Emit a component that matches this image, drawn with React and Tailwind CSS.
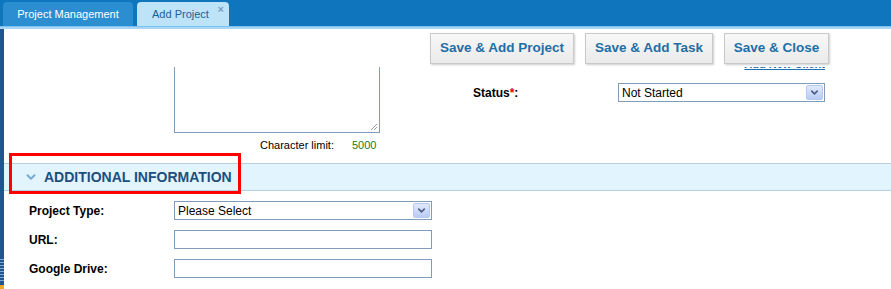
import { ChevronDown } from 'lucide-react';

const font = { fontFamily: '"Liberation Sans", Arial, sans-serif' };

function SelectBox({ value, width }) {
  return (
    <div className={`flex items-center justify-between h-[19px] ${width} border border-[#7f9db9] bg-white pl-[3px] pr-px`}>
      <span className="text-[12px] text-black leading-none">{value}</span>
      <span className="w-[17px] h-[15px] rounded-[2px] bg-gradient-to-b from-[#e1e9fc] to-[#b9ccf4] border border-[#b7c8ef] flex items-center justify-center">
        <ChevronDown className="w-[11px] h-[11px] text-[#4c5f85]" strokeWidth={3.5} />
      </span>
    </div>
  );
}

function Field({ label, children }) {
  return (
    <div className="flex items-center h-[19px]">
      <div className="w-[170px] pl-[25px] text-[12px] font-bold text-black">{label}</div>
      {children}
    </div>
  );
}

export default function App() {
  return (
    <div className="w-[891px] h-[289px] overflow-hidden bg-white flex flex-col" style={font}>
      {/* tab strip */}
      <div className="h-[26px] bg-[#0f75bc] flex items-end pl-[3px] gap-[4px] shrink-0">
        <div className="h-[24px] w-[130px] rounded-t-[4px] bg-[#2b8ed0] flex items-center justify-center text-[11px] text-white">
          Project Management
        </div>
        <div className="relative h-[24px] w-[92px] rounded-t-[4px] bg-[#bde3f9] flex items-center pl-[15px] text-[11px] text-[#1a5f98]">
          Add Project
          <span className="absolute right-[5px] top-[2px] text-[11px] font-bold text-[#7d9fbf] leading-none">×</span>
        </div>
      </div>
      <div className="h-[3px] bg-[#a8d6f6] border-t border-[#7fc0ec] shrink-0" />

      <div className="flex flex-1 min-h-0">
        {/* left splitter */}
        <div className="w-[4px] bg-[#1f5591] flex flex-col shrink-0">
          <div className="flex-1" />
          <div className="h-[22px] mb-[4px] bg-[repeating-linear-gradient(to_bottom,#7fa9d6_0px,#7fa9d6_1px,#1f5591_1px,#1f5591_3px)]" />
          <div className="h-[4px] bg-[#f5a623]" />
        </div>

        <div className="flex-1 relative flex flex-col">
          {/* toolbar */}
          <div className="h-[38px] flex justify-end items-start pt-[4px] pr-[62px] gap-[11px] bg-white relative z-10">
            {['Save & Add Project', 'Save & Add Task', 'Save & Close'].map((t, i) => (
              <button
                key={t}
                className={`h-[31px] ${['w-[144px]', 'w-[128px]', 'w-[105px]'][i]} border border-[#c9c9c9] bg-gradient-to-b from-[#f8f8f8] to-[#eaeaea] shadow-[1px_1px_2px_rgba(0,0,0,0.2)] text-[13.5px] font-bold text-[#1e6ea7]`}
              >
                {t}
              </button>
            ))}
          </div>

          {/* upper form (scrolled) */}
          <div className="h-[96px] flex">
            <div className="pl-[170px] w-[376px]">
              <div className="h-[66px] w-[206px] overflow-hidden">
                <div className="relative h-[100px] -mt-[34px] border border-[#7f9db9] bg-white">
                  <svg className="absolute right-[1px] bottom-[1px]" width="8" height="8" viewBox="0 0 8 8">
                    <path d="M7 1 L1 7 M7 4 L4 7" stroke="#9a9a9a" strokeWidth="1" />
                  </svg>
                </div>
              </div>
              <div className="flex text-[11px] mt-[4px] pl-[86px]">
                <span className="text-black">Character limit:</span>
                <span className="ml-[18px] text-[#1b7a1b]">5000</span>
              </div>
            </div>
            <div className="w-[352px] ml-[93px]">
              <div className="h-[5px] overflow-hidden flex justify-end">
                <span className="-mt-[9px] text-[11px] font-bold text-[#1a6fb0] underline leading-[13px]">Add New Client</span>
              </div>
              <div className="flex items-center mt-[11px]">
                <div className="w-[145px] text-[12px] font-bold text-black">
                  Status<span className="text-[#e00000]">*</span>:
                </div>
                <SelectBox value="Not Started" width="w-[207px]" />
              </div>
            </div>
          </div>

          {/* section header */}
          <div className="relative h-[28px] border-y border-[#b3d1e3] bg-[#e2f4fd] flex items-center pl-[20px] gap-[6px]">
            <ChevronDown className="w-[14px] h-[14px] text-[#79acd4]" strokeWidth={3.5} />
            <span className="text-[14px] font-bold text-[#1c4e7e]">ADDITIONAL INFORMATION</span>
            <div className="absolute left-[5px] top-[-11px] w-[232px] h-[41px] border-[3px] border-[#ff0000] pointer-events-none" />
          </div>

          {/* additional fields */}
          <div className="flex flex-col gap-[10px] pt-[10px]">
            <Field label="Project Type:">
              <SelectBox value="Please Select" width="w-[258px]" />
            </Field>
            <Field label="URL:">
              <input className="h-[19px] w-[258px] border border-[#7f9db9] bg-white outline-none" />
            </Field>
            <Field label="Google Drive:">
              <input className="h-[19px] w-[258px] border border-[#7f9db9] bg-white outline-none" />
            </Field>
          </div>
        </div>
      </div>
    </div>
  );
}
